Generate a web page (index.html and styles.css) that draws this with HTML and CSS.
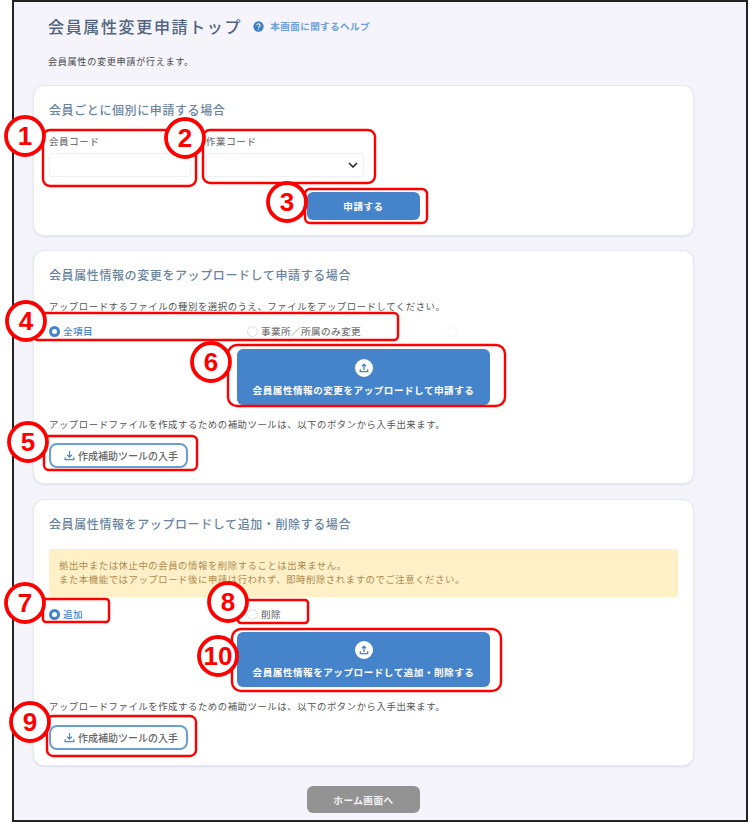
FILE: index.html
```html
<!DOCTYPE html>
<html lang="ja">
<head>
<meta charset="utf-8">
<title>会員属性変更申請トップ</title>
<link rel="stylesheet" href="styles.css">
</head>
<body>
<div class="frame">
  <header class="page-head">
    <h1 class="page-title">会員属性変更申請トップ</h1>
    <a class="help-link" href="#">
      <svg class="help-icon" viewBox="0 0 12 12"><circle cx="6" cy="6" r="5.6" fill="#3f7fc4"/><path d="M4.3 4.7a1.7 1.7 0 1 1 2.6 1.4c-.6.4-.9.7-.9 1.3" fill="none" stroke="#fff" stroke-width="1.2"/><circle cx="6" cy="9.1" r=".75" fill="#fff"/></svg>
      <span>本画面に関するヘルプ</span>
    </a>
  </header>
  <p class="intro">会員属性の変更申請が行えます。</p>

  <section class="card card-first">
    <h2 class="card-title">会員ごとに個別に申請する場合</h2>
    <div class="fields">
      <div class="field field-code">
        <label class="field-label">会員コード</label>
        <input class="control" type="text">
      </div>
      <div class="field field-work">
        <label class="field-label">作業コード</label>
        <div class="select-wrap">
          <select class="control"><option></option></select>
          <svg class="chevron" viewBox="0 0 10 6"><path d="M1 1l4 4 4-4" fill="none" stroke="#222" stroke-width="1.5"/></svg>
        </div>
      </div>
    </div>
    <div class="center"><button class="btn btn-primary btn-submit">申請する</button></div>
  </section>

  <section class="card card-upload">
    <h2 class="card-title">会員属性情報の変更をアップロードして申請する場合</h2>
    <p class="text text-lead">アップロードするファイルの種別を選択のうえ、ファイルをアップロードしてください。</p>
    <div class="radios">
      <span class="radio is-on"><i class="dot"></i>全項目</span>
      <span class="radio"><i class="dot"></i>事業所／所属のみ変更</span>
      <span class="radio radio-ghost"><i class="dot"></i></span>
    </div>
    <div class="center">
      <button class="btn btn-primary btn-upload">
        <svg class="upload-icon" viewBox="0 0 18 18"><circle cx="9" cy="9" r="9" fill="#fff"/><path d="M9 11V5.3M6.8 7.4 9 5.2l2.2 2.2M5.3 10.3v2.3h7.4v-2.3" fill="none" stroke="#4584ca" stroke-width="1.3"/></svg>
        <span>会員属性情報の変更をアップロードして申請する</span>
      </button>
    </div>
    <p class="text text-tool">アップロードファイルを作成するための補助ツールは、以下のボタンから入手出来ます。</p>
    <button class="btn btn-tool">
      <svg class="tool-icon" viewBox="0 0 12 12"><path d="M6 1v6.6M3.4 5.2 6 7.8l2.6-2.6M1.2 8v2.6h9.6V8" fill="none" stroke="#4a86c8" stroke-width="1.3"/></svg>
      <span>作成補助ツールの入手</span>
    </button>
  </section>

  <section class="card card-add">
    <h2 class="card-title">会員属性情報をアップロードして追加・削除する場合</h2>
    <div class="notice">拠出中または休止中の会員の情報を削除することは出来ません。<br>また本機能ではアップロード後に申請は行われず、即時削除されますのでご注意ください。</div>
    <div class="radios radios-add">
      <span class="radio is-on"><i class="dot"></i>追加</span>
      <span class="radio"><i class="dot"></i>削除</span>
    </div>
    <div class="center">
      <button class="btn btn-primary btn-upload">
        <svg class="upload-icon" viewBox="0 0 18 18"><circle cx="9" cy="9" r="9" fill="#fff"/><path d="M9 11V5.3M6.8 7.4 9 5.2l2.2 2.2M5.3 10.3v2.3h7.4v-2.3" fill="none" stroke="#4584ca" stroke-width="1.3"/></svg>
        <span>会員属性情報をアップロードして追加・削除する</span>
      </button>
    </div>
    <p class="text text-tool">アップロードファイルを作成するための補助ツールは、以下のボタンから入手出来ます。</p>
    <button class="btn btn-tool">
      <svg class="tool-icon" viewBox="0 0 12 12"><path d="M6 1v6.6M3.4 5.2 6 7.8l2.6-2.6M1.2 8v2.6h9.6V8" fill="none" stroke="#4a86c8" stroke-width="1.3"/></svg>
      <span>作成補助ツールの入手</span>
    </button>
  </section>

  <div class="center home-row"><button class="btn btn-home">ホーム画面へ</button></div>
</div>

<svg class="marks" viewBox="0 0 750 823">
  <g class="mark-boxes">
    <rect x="43" y="130" width="153" height="56" rx="7"/>
    <rect x="203" y="130" width="172" height="53" rx="7"/>
    <rect x="305" y="189" width="122" height="34" rx="5"/>
    <rect x="34" y="313" width="364" height="27" rx="4"/>
    <rect x="228" y="345" width="277" height="61" rx="9"/>
    <rect x="44" y="436" width="153" height="34" rx="5"/>
    <rect x="43" y="599" width="66" height="23" rx="3"/>
    <rect x="238" y="600" width="70" height="23" rx="3"/>
    <rect x="232" y="629" width="269" height="62" rx="9"/>
    <rect x="47" y="716" width="149" height="40" rx="6"/>
  </g>
  <g class="mark-circles">
    <circle cx="25" cy="136" r="19"/>
    <circle cx="185" cy="138" r="19"/>
    <circle cx="287" cy="202" r="19"/>
    <circle cx="26" cy="321" r="19"/>
    <circle cx="28" cy="442" r="19"/>
    <circle cx="211" cy="362" r="19"/>
    <circle cx="25" cy="603" r="19"/>
    <circle cx="228" cy="602" r="19"/>
    <circle cx="30" cy="722" r="19"/>
    <circle cx="218" cy="656" r="19"/>
  </g>
  <g class="mark-nums">
    <text x="25" y="145">1</text>
    <text x="185" y="147">2</text>
    <text x="287" y="211">3</text>
    <text x="26" y="330">4</text>
    <text x="28" y="451">5</text>
    <text x="211" y="371">6</text>
    <text x="25" y="612">7</text>
    <text x="228" y="611">8</text>
    <text x="30" y="731">9</text>
    <text x="218" y="665">10</text>
  </g>
</svg>
</body>
</html>
```

FILE: styles.css
```css
* { box-sizing: border-box; }

html, body { margin: 0; padding: 0; background: #fff; }

body {
  position: relative;
  width: 750px;
  height: 823px;
  overflow: hidden;
  font-family: "Noto Sans CJK JP", "Noto Sans", sans-serif;
}

.frame {
  width: 736px;
  height: 822px;
  margin-left: 12px;
  padding: 14px 0 0 20px;
  background: #f4f4fa;
  border: 2px solid #222;
}

.page-head {
  display: flex;
  align-items: center;
  height: 20px;
  padding-left: 14px;
}

.page-title {
  margin: 0;
  font-size: 16px;
  font-weight: 500;
  line-height: 20px;
  letter-spacing: 1.65px;
  color: #52647e;
}

.help-link {
  display: flex;
  align-items: center;
  margin-left: 11px;
  font-size: 9.6px;
  font-weight: 700;
  letter-spacing: .4px;
  color: #6f9fd8;
  text-decoration: none;
}

.help-icon { width: 11px; height: 11px; margin-right: 6px; }

.intro {
  margin: 18px 0 0 14px;
  font-size: 9.2px;
  line-height: 14px;
  letter-spacing: .6px;
  color: #4a4a4a;
}

.card {
  width: 659px;
  padding: 16px 15px 15px;
  margin-top: 16px;
  background: #fff;
  border-radius: 10px;
  box-shadow: 0 0 0 1px #e8eaf1, 0 1px 2px 1px #dcdfe8;
}

.card-first { margin-top: 18px; height: 149px; }
.card-upload { height: 232px; }
.card-add { margin-top: 17px; height: 265px; }

.card-title {
  margin: 0;
  font-size: 12px;
  font-weight: 500;
  line-height: 16px;
  letter-spacing: .6px;
  color: #6a84a0;
}

.fields { display: flex; margin-top: 16px; }
.field-code { width: 142px; margin-right: 15px; }
.field-work { width: 158px; }

.field-label {
  display: block;
  margin-bottom: 5px;
  font-size: 9.5px;
  font-weight: 500;
  line-height: 14px;
  letter-spacing: .6px;
  color: #777;
}

.control {
  display: block;
  width: 100%;
  height: 24px;
  padding: 0 6px;
  background: #fff;
  border: 1px solid #f0f0f3;
  border-radius: 3px;
  appearance: none;
}

.select-wrap { position: relative; }

.chevron {
  position: absolute;
  top: 9px;
  right: 6px;
  width: 10px;
  height: 6px;
}

.center { display: flex; justify-content: center; }

.btn {
  padding: 0;
  font-family: inherit;
  border: none;
  cursor: pointer;
}

.btn-primary {
  color: #fff;
  font-size: 9.6px;
  font-weight: 700;
  letter-spacing: .5px;
  background: #4584ca;
  border-radius: 6px;
}

.btn-submit { width: 113px; height: 28px; margin-top: 15px; }

.btn-upload {
  display: flex;
  flex-direction: column;
  align-items: center;
  width: 253px;
  height: 56px;
  padding-top: 10px;
  margin-top: 11px;
}

.card-add .btn-upload { height: 55px; padding-top: 9px; }

.upload-icon { width: 18px; height: 18px; margin-bottom: 6px; }

.text {
  margin: 0;
  font-size: 9.4px;
  line-height: 14px;
  letter-spacing: .55px;
  color: #555;
  white-space: nowrap;
}

.text-lead { margin-top: 16px; }
.text-tool { margin-top: 12px; }

.radios {
  display: grid;
  grid-template-columns: 198px 200px 100px;
  margin-top: 11px;
}

.radios-add { margin-top: 10px; }

.radio {
  display: flex;
  align-items: center;
  height: 14px;
  font-size: 9.6px;
  font-weight: 500;
  letter-spacing: .4px;
  color: #777;
}

.dot {
  width: 11px;
  height: 11px;
  margin-right: 3px;
  background: #fff;
  border: 1px solid #ddd;
  border-radius: 50%;
}

.radio.is-on { color: #4a86c8; }
.radio.is-on .dot { border: 3.5px solid #4584ca; }
.radio-ghost .dot { border-color: #f8f8f8; }

.btn-tool {
  display: flex;
  align-items: center;
  width: 139px;
  height: 25px;
  padding-left: 13px;
  margin-top: 12px;
  font-size: 10px;
  font-weight: 500;
  color: #666;
  background: #fff;
  border: 2px solid #6a9ed6;
  border-radius: 8px;
}

.tool-icon { width: 11px; height: 11px; margin-right: 3px; }

.notice {
  height: 48px;
  padding: 10px 10px;
  margin-top: 17px;
  font-size: 9.4px;
  line-height: 13.5px;
  letter-spacing: .55px;
  color: #ae8a4e;
  white-space: nowrap;
  background: #fff0c8;
  border-radius: 2px;
}

.home-row { width: 659px; margin-top: 21px; }

.btn-home {
  width: 113px;
  height: 27px;
  font-size: 9.6px;
  font-weight: 700;
  letter-spacing: .5px;
  color: #f4f4f4;
  background: #939393;
  border-radius: 6px;
}

.marks {
  position: absolute;
  top: 0;
  left: 0;
  width: 750px;
  height: 823px;
  pointer-events: none;
}

.mark-boxes rect {
  fill: none;
  stroke: #f00;
  stroke-width: 2.4;
}

.mark-circles circle {
  fill: #fff;
  stroke: #f00;
  stroke-width: 3.8;
}

.mark-nums text {
  font-family: "Liberation Sans", Arial, sans-serif;
  font-size: 26px;
  font-weight: 700;
  text-anchor: middle;
  fill: #f00;
}
```
